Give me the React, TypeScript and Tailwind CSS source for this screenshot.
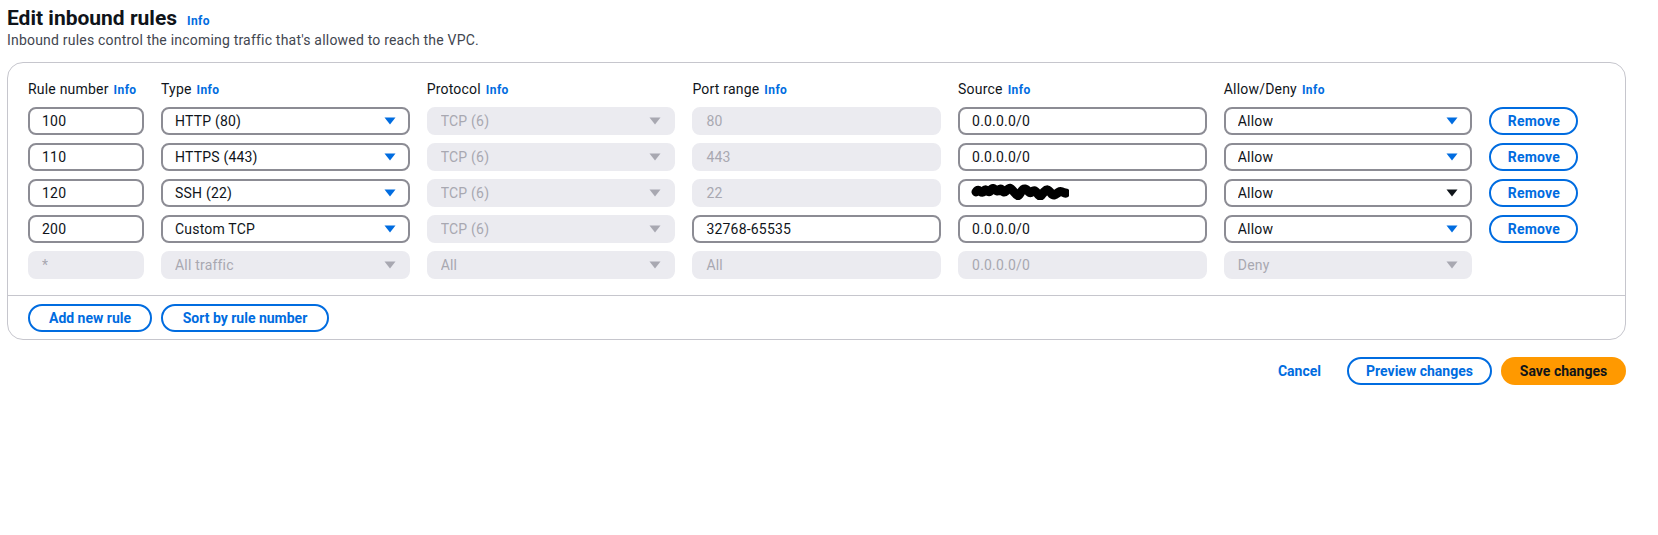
import React from "react"

type Rule = {
  num: string
  type: string
  protocol: string
  port: string
  portEditable: boolean
  source: string
  redacted?: boolean
  action: string
  hoverCaret?: boolean
  locked?: boolean
}

const rules: Rule[] = [
  { num: "100", type: "HTTP (80)", protocol: "TCP (6)", port: "80", portEditable: false, source: "0.0.0.0/0", action: "Allow" },
  { num: "110", type: "HTTPS (443)", protocol: "TCP (6)", port: "443", portEditable: false, source: "0.0.0.0/0", action: "Allow" },
  { num: "120", type: "SSH (22)", protocol: "TCP (6)", port: "22", portEditable: false, source: "", redacted: true, action: "Allow", hoverCaret: true },
  { num: "200", type: "Custom TCP", protocol: "TCP (6)", port: "32768-65535", portEditable: true, source: "0.0.0.0/0", action: "Allow" },
  { num: "*", type: "All traffic", protocol: "All", port: "All", portEditable: false, source: "0.0.0.0/0", action: "Deny", locked: true },
]

function Caret({ color }: { color: string }) {
  return (
    <svg width="12" height="8" viewBox="0 0 12 8" className={color}>
      <path d="M0.5 0.5h11L6 7.5z" fill="currentColor" />
    </svg>
  )
}

function Info() {
  return <span className="ml-[5px] text-[12px] font-bold tracking-[0.4px] text-[#006ce0]">Info</span>
}

function Field({ value, disabled, select, caretColor }: { value: string; disabled?: boolean; select?: boolean; caretColor?: string }) {
  const base = "flex h-[28px] items-center justify-between rounded-lg border-2 pl-[12px] pr-[12px] text-[14px] tracking-[0.2px]"
  const look = disabled
    ? "border-[#ebebf0] bg-[#ebebf0] text-[#a8a8b1]"
    : "border-[#8c8c94] bg-white text-[#0f141a]"
  return (
    <div className={`${base} ${look}`}>
      <span className="truncate">{value}</span>
      {select && <Caret color={disabled ? "text-[#a8a8b1]" : caretColor ?? "text-[#006ce0]"} />}
    </div>
  )
}

// redacted source value, scribbled over in the original
function Scribble() {
  return (
    <svg width="98" height="18" viewBox="0 0 98 18" className="-mt-[5px]">
      <path
        d="M5 10c3-5 5 3 8-1s4 4 7-1 5 4 8 0 3 5 7 1 4-4 8 1 4 5 7 0 5-3 8 0 4-5 8 1 4 2 7-1 4-3 7 1 5 1 8-1 5 2 7 1"
        stroke="#000"
        strokeWidth="9"
        fill="none"
        strokeLinecap="round"
        strokeLinejoin="round"
      />
    </svg>
  )
}

function OutlineButton({ label, width }: { label: string; width: string }) {
  return (
    <button className={`${width} flex h-[28px] items-center justify-center rounded-full border-2 border-[#006ce0] bg-white text-[14px] font-bold text-[#006ce0]`}>
      {label}
    </button>
  )
}

export default function App() {
  return (
    <div className="min-h-screen bg-white font-['Roboto','Liberation_Sans',sans-serif] text-[#0f141a]">
      <div className="w-[1619px] pl-[7px] pt-[7px] box-content">
        {/* Page header */}
        <div className="flex items-baseline">
          <h1 className="text-[21px] font-bold leading-[23px]">Edit inbound rules</h1>
          <span className="ml-[10px] text-[12px] font-bold tracking-[0.4px] text-[#006ce0]">Info</span>
        </div>
        <p className="text-[14px] leading-[20px] tracking-[0.2px] text-[#424650]">
          Inbound rules control the incoming traffic that's allowed to reach the VPC.
        </p>

        {/* Rules card */}
        <div className="mt-[12px] rounded-2xl border border-[#c6c6cd] bg-white">
          <div className="px-5 pt-4 pb-4">
            <div className="grid grid-cols-[116px_repeat(5,248.7px)_89px] gap-x-[17px] gap-y-2 text-[14px] tracking-[0.2px]">
              <div className="h-5 leading-5">Rule number<Info /></div>
              <div className="h-5 leading-5">Type<Info /></div>
              <div className="h-5 leading-5">Protocol<Info /></div>
              <div className="h-5 leading-5">Port range<Info /></div>
              <div className="h-5 leading-5">Source<Info /></div>
              <div className="h-5 leading-5">Allow/Deny<Info /></div>
              <div />
              {rules.map((r) => (
                <React.Fragment key={r.num}>
                  <Field value={r.num} disabled={r.locked} />
                  <Field value={r.type} disabled={r.locked} select />
                  <Field value={r.protocol} disabled select />
                  <Field value={r.port} disabled={!r.portEditable} />
                  {r.redacted ? (
                    <div className="flex h-[28px] items-center rounded-lg border-2 border-[#8c8c94] pl-[11px]">
                      <Scribble />
                    </div>
                  ) : (
                    <Field value={r.source} disabled={r.locked} />
                  )}
                  <Field value={r.action} disabled={r.locked} select caretColor={r.hoverCaret ? "text-[#0f141a]" : undefined} />
                  {r.locked ? <div /> : <OutlineButton label="Remove" width="w-[89px]" />}
                </React.Fragment>
              ))}
            </div>
          </div>
          <div className="flex gap-[9px] border-t border-[#c6c6cd] px-5 pt-2 pb-[7px]">
            <OutlineButton label="Add new rule" width="w-[124px]" />
            <OutlineButton label="Sort by rule number" width="w-[168px]" />
          </div>
        </div>

        {/* Form actions */}
        <div className="mt-[17px] flex items-center justify-end">
          <button className="mr-[26px] text-[14px] font-bold text-[#006ce0]">Cancel</button>
          <OutlineButton label="Preview changes" width="w-[145px]" />
          <button className="ml-[9px] flex h-[28px] w-[125px] items-center justify-center rounded-full bg-[#ff9900] text-[14px] font-bold text-[#0f141a]">
            Save changes
          </button>
        </div>
      </div>
    </div>
  )
}
